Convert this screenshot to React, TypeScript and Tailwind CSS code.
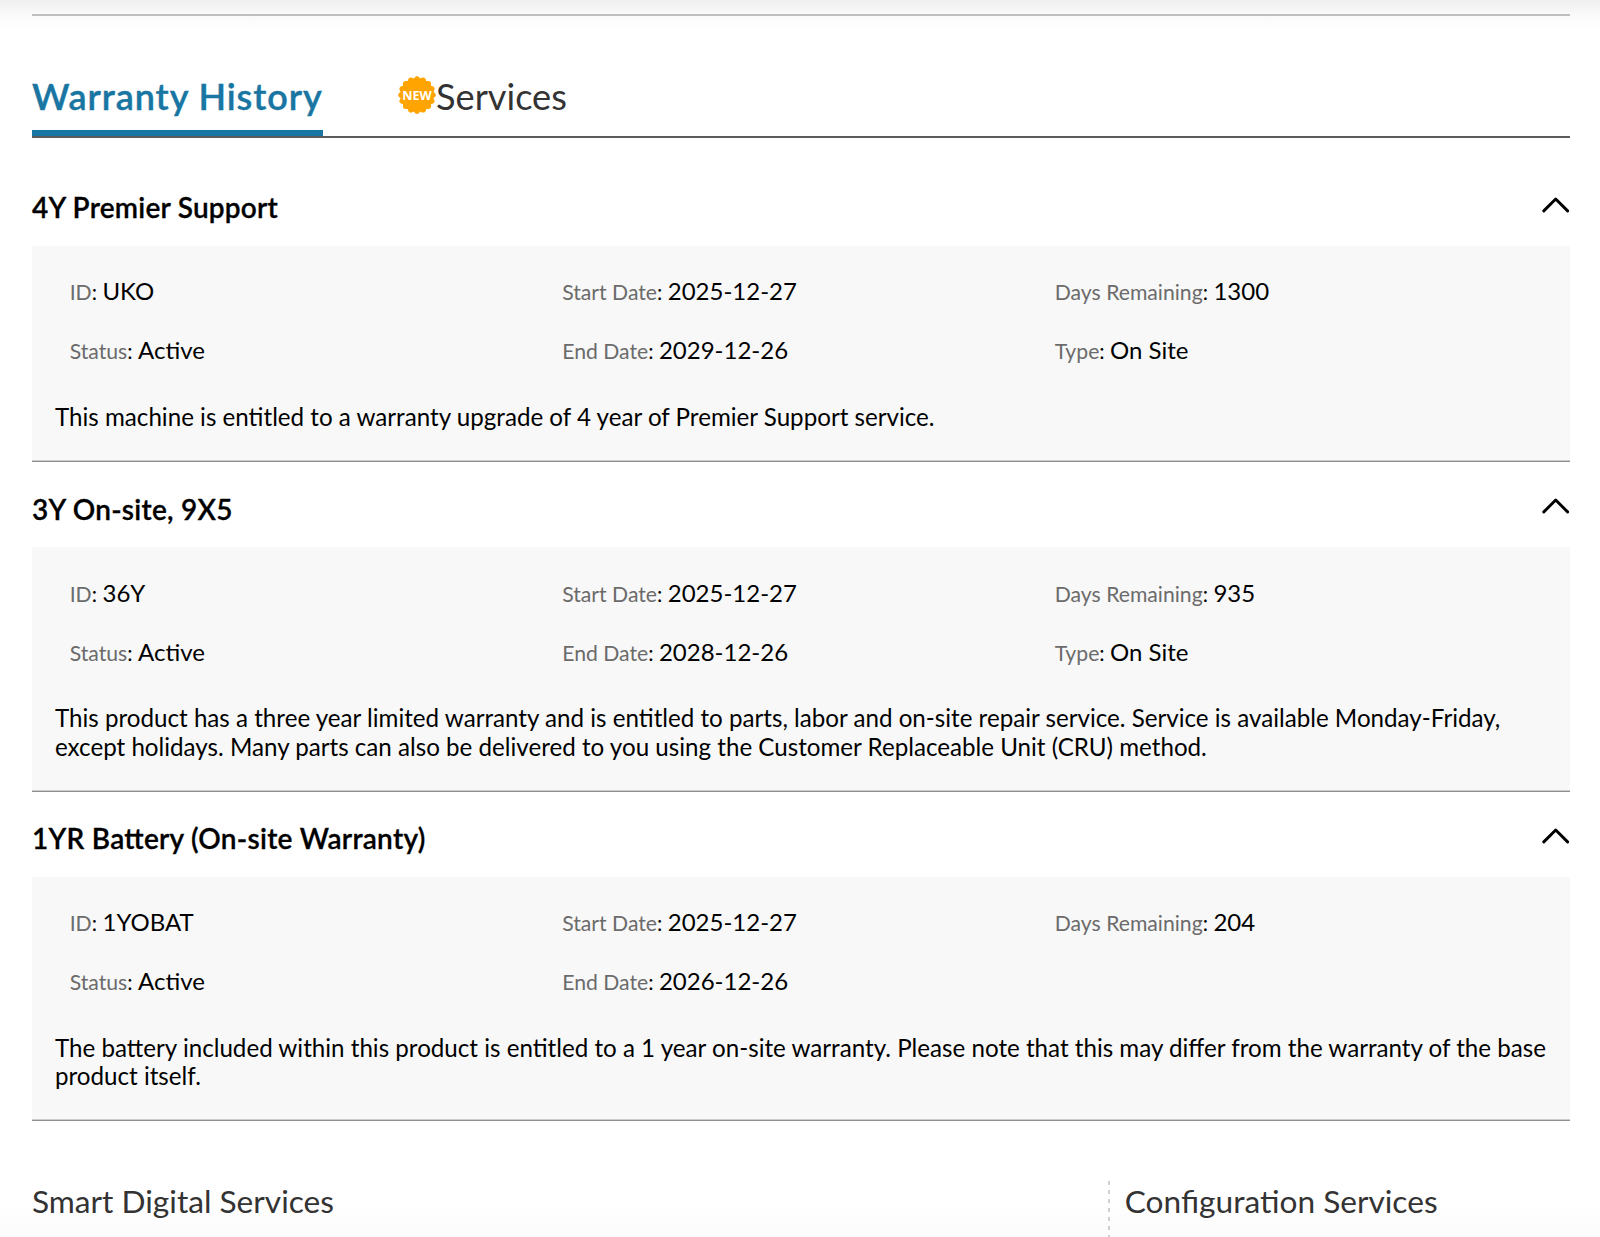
type Warranty = {
  name: string
  nameClass: string
  fields: { label: string; value: string }[]
  description: string
}

const warranties: Warranty[] = [
  {
    name: '4Y Premier Support',
    nameClass: 'tracking-[0.22px]',
    fields: [
      { label: 'ID', value: 'UKO' },
      { label: 'Start Date', value: '2025-12-27' },
      { label: 'Days Remaining', value: '1300' },
      { label: 'Status', value: 'Active' },
      { label: 'End Date', value: '2029-12-26' },
      { label: 'Type', value: 'On Site' },
    ],
    description: 'This machine is entitled to a warranty upgrade of 4 year of Premier Support service.',
  },
  {
    name: '3Y On-site, 9X5',
    nameClass: 'tracking-[0.26px]',
    fields: [
      { label: 'ID', value: '36Y' },
      { label: 'Start Date', value: '2025-12-27' },
      { label: 'Days Remaining', value: '935' },
      { label: 'Status', value: 'Active' },
      { label: 'End Date', value: '2028-12-26' },
      { label: 'Type', value: 'On Site' },
    ],
    description:
      'This product has a three year limited warranty and is entitled to parts, labor and on-site repair service. Service is available Monday-Friday, except holidays. Many parts can also be delivered to you using the Customer Replaceable Unit (CRU) method.',
  },
  {
    name: '1YR Battery (On-site Warranty)',
    nameClass: 'tracking-[0.26px]',
    fields: [
      { label: 'ID', value: '1YOBAT' },
      { label: 'Start Date', value: '2025-12-27' },
      { label: 'Days Remaining', value: '204' },
      { label: 'Status', value: 'Active' },
      { label: 'End Date', value: '2026-12-26' },
    ],
    description:
      'The battery included within this product is entitled to a 1 year on-site warranty. Please note that this may differ from the warranty of the base product itself.',
  },
]

// scalloped seal outline, 16 bumps
const sealPath = (() => {
  const n = 16
  const point = (i: number, r: number) => {
    const a = (i * Math.PI) / n - Math.PI / 2
    return `${(19 + r * Math.cos(a)).toFixed(2)} ${(19 + r * Math.sin(a)).toFixed(2)}`
  }
  let d = `M${point(-1, 16.7)}`
  for (let i = 0; i < n; i++) {
    d += `Q${point(2 * i, 21.4)} ${point(2 * i + 1, 16.7)}`
  }
  return d + 'Z'
})()

function NewBadge() {
  return (
    <svg width="38" height="38" viewBox="0 0 38 38" className="shrink-0">
      <path d={sealPath} fill="#ffa400" />
      <text
        x="19"
        y="23.6"
        textAnchor="middle"
        textLength="29.5"
        lengthAdjust="spacingAndGlyphs"
        className="fill-white font-['Open_Sans'] text-[12.5px] font-bold"
      >
        NEW
      </text>
    </svg>
  )
}

function ChevronUp() {
  return (
    <svg width="28" height="16" viewBox="0 0 28 16" fill="none" className="mt-[36px]">
      <path d="M1.8 13.9L13.7 2L25.6 13.9" stroke="#000" strokeWidth="2.9" strokeLinecap="round" strokeLinejoin="round" />
    </svg>
  )
}

function WarrantyItem({ item }: { item: Warranty }) {
  return (
    <section>
      <div className="flex h-[85.5px] items-start justify-between">
        <h3
          className={`pt-[30.7px] text-[28px] leading-[33.6px] font-semibold [-webkit-text-stroke:0.3px_black] [font-feature-settings:'liga'] ${item.nameClass}`}
        >
          {item.name}
        </h3>
        <ChevronUp />
      </div>
      <div className="border-b border-[#8f8f8f] bg-[#f8f8f8] pt-[15.1px] pb-[29.6px] shadow-[inset_0_-1px_0_#cccccc]">
        <div className="grid grid-cols-[492.5px_492.5px_1fr] pl-[37.7px]">
          {item.fields.map(f => (
            <div key={f.label} className="h-[59px] text-[24px] leading-[59px]">
              <span className="text-[21.2px]">
                <span className="text-[#6b6b6b]">{f.label}</span>:{' '}
              </span>
              {f.value}
            </div>
          ))}
        </div>
        <p className="mt-[23.7px] pr-4 pl-[23px] text-[24.17px] leading-[28.4px]">{item.description}</p>
      </div>
    </section>
  )
}

export default function App() {
  return (
    <div className="h-[1237px] w-[1600px] overflow-hidden bg-[linear-gradient(#efefef,#fafafa_15px,#ffffff_32px,#ffffff_1200px,#fbfbfb)] pr-[30px] pl-8 font-[Lato,sans-serif] text-black">
      <div className="mt-[14px] h-[2px] bg-[#bfbfbf]" />

      <nav className="flex h-[122px] items-end gap-[75.5px] border-b-2 border-[#5c5c5c]">
        <div className="h-[65px] w-[290.5px] border-b-[6px] border-[#1976a2] text-[36px] leading-[43.2px] font-semibold tracking-[0.95px] whitespace-nowrap text-[#1976a2] [-webkit-text-stroke:0.4px_#1976a2]">
          <div className="pt-[3.8px]">Warranty History</div>
        </div>
        <div className="flex h-[65px] items-start text-[36.2px] leading-[43.2px] text-[#333333]">
          <div className="pt-[4.6px]">
            <NewBadge />
          </div>
          <div className="pt-[3.8px]">Services</div>
        </div>
      </nav>

      <main className="pt-[22.7px]">
        {warranties.map(w => (
          <WarrantyItem key={w.name} item={w} />
        ))}
      </main>

      <div className="flex pt-[59.8px] text-[31.65px] leading-[40px] text-[#333333]">
        <h2 className="w-[1076px]">Smart Digital Services</h2>
        <div className="h-[60px] w-[2px] bg-[repeating-linear-gradient(#cfcfcf_0_4px,transparent_4px_9px)]" />
        <h2 className="pl-[14.8px]">Configuration Services</h2>
      </div>
    </div>
  )
}
